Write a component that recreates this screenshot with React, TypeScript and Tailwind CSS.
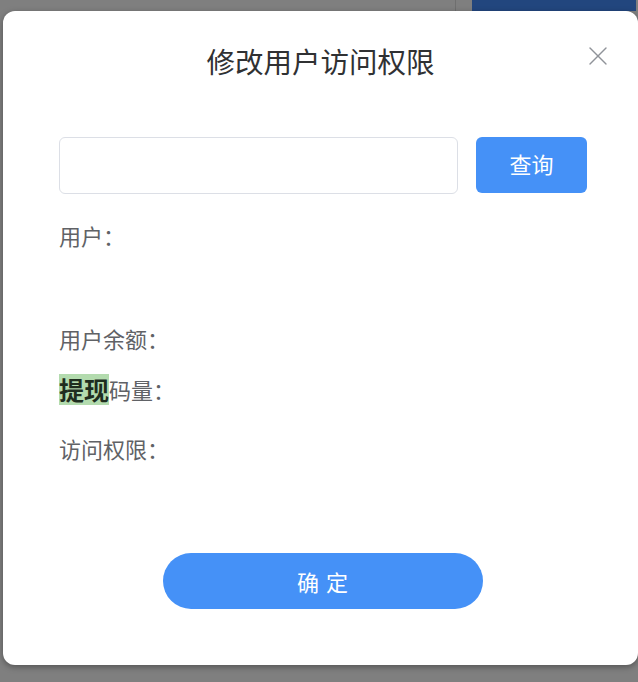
import { X } from "lucide-react"

export default function App() {
  return (
    <div
      className="relative h-[682px] w-[638px] overflow-hidden bg-[#7f7f7f]"
      style={{ fontFamily: '"Noto Sans CJK SC", "Noto Sans", sans-serif' }}
    >
      {/* page behind the overlay */}
      <div className="flex h-[11px]">
        <div className="w-[456px] border-r border-[#6f6f6f]" />
        <div className="ml-[16px] w-[164px] bg-[#22467e]" />
      </div>

      <Dialog />
    </div>
  )
}

function Dialog() {
  return (
    <div className="absolute left-[3px] top-[11px] flex h-[654px] w-[635px] flex-col rounded-[12px] bg-white shadow-[0_2px_6px_rgba(0,0,0,0.35)]">
      <h2 className="mt-[30px] text-center text-[28.5px] leading-[40px] text-[#303133]">修改用户访问权限</h2>
      <button className="absolute left-[579px] top-[29px] text-[#909399]">
        <X size={32} strokeWidth={1} />
      </button>

      <div className="ml-[56px] mt-[56px] flex gap-[18px]">
        <input className="h-[57px] w-[399px] rounded-[6px] border border-[#dcdfe6] px-4 text-[18px] outline-none" />
        <button className="h-[56px] w-[111px] rounded-[6px] bg-[#4591f7] pb-[3px] text-[22px] text-white">查询</button>
      </div>

      <div className="ml-[56px] flex flex-col text-[22px] text-[#606266]">
        <Row className="mt-[26px]">用户：</Row>
        <Row className="mt-[73px]">用户余额：</Row>
        <div className="mt-[21px] flex h-[31px] items-center">
          <mark className="bg-[#b3dbae] text-[25px] font-bold leading-[31px] text-[#1f2d1f]">提现</mark>
          <span>码量：</span>
        </div>
        <Row className="mt-[28px]">访问权限：</Row>
      </div>

      <button className="ml-[160px] mt-[90px] h-[56px] w-[320px] rounded-full bg-[#4591f7] text-[22px] tracking-[1px] text-white">
        确 定
      </button>
    </div>
  )
}

function Row({ className, children }: { className: string; children: React.ReactNode }) {
  return <div className={`flex h-[30px] items-center ${className}`}>{children}</div>
}
